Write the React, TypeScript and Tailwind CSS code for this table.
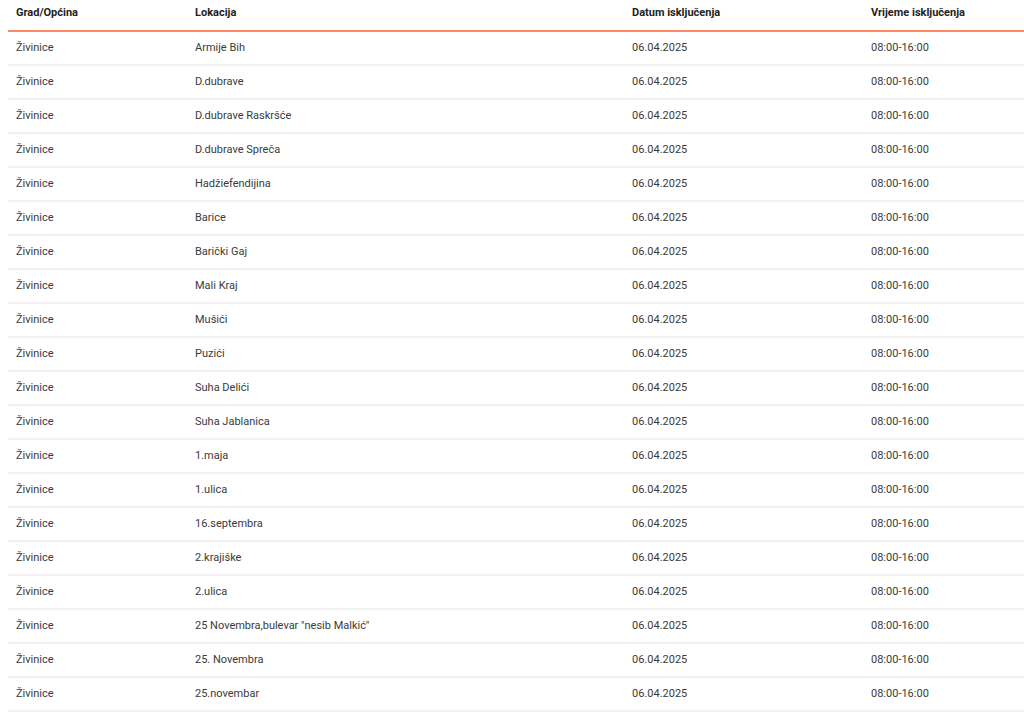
const locations = [
  'Armije Bih',
  'D.dubrave',
  'D.dubrave Raskršće',
  'D.dubrave Spreča',
  'Hadžiefendijina',
  'Barice',
  'Barički Gaj',
  'Mali Kraj',
  'Mušići',
  'Puzići',
  'Suha Delići',
  'Suha Jablanica',
  '1.maja',
  '1.ulica',
  '16.septembra',
  '2.krajiške',
  '2.ulica',
  '25 Novembra,bulevar "nesib Malkić"',
  '25. Novembra',
  '25.novembar',
];

const headers = ['Grad/Općina', 'Lokacija', 'Datum isključenja', 'Vrijeme isključenja'];

export default function App() {
  return (
    <div className="bg-white pl-2 font-['Roboto',sans-serif] text-[11px]">
      <table className="w-full table-fixed border-separate border-spacing-0 text-left">
        <colgroup>
          <col className="w-[179px]" />
          <col className="w-[437px]" />
          <col className="w-[239px]" />
          <col />
        </colgroup>
        <thead>
          <tr className="h-[32px]">
            {headers.map((h) => (
              <th
                key={h}
                className="border-b-2 border-solid border-b-[#ff8866] px-2 pb-[4px] align-middle font-bold text-[#222]"
              >
                {h}
              </th>
            ))}
          </tr>
        </thead>
        <tbody>
          {locations.map((loc) => (
            <tr key={loc} className="h-[34px] text-[#3a3a3a]">
              {['Živinice', loc, '06.04.2025', '08:00-16:00'].map((v, i) => (
                <td key={i} className="border-b-2 border-solid border-b-[#f2f2f2] px-2 align-middle">
                  {v}
                </td>
              ))}
            </tr>
          ))}
        </tbody>
      </table>
    </div>
  );
}
